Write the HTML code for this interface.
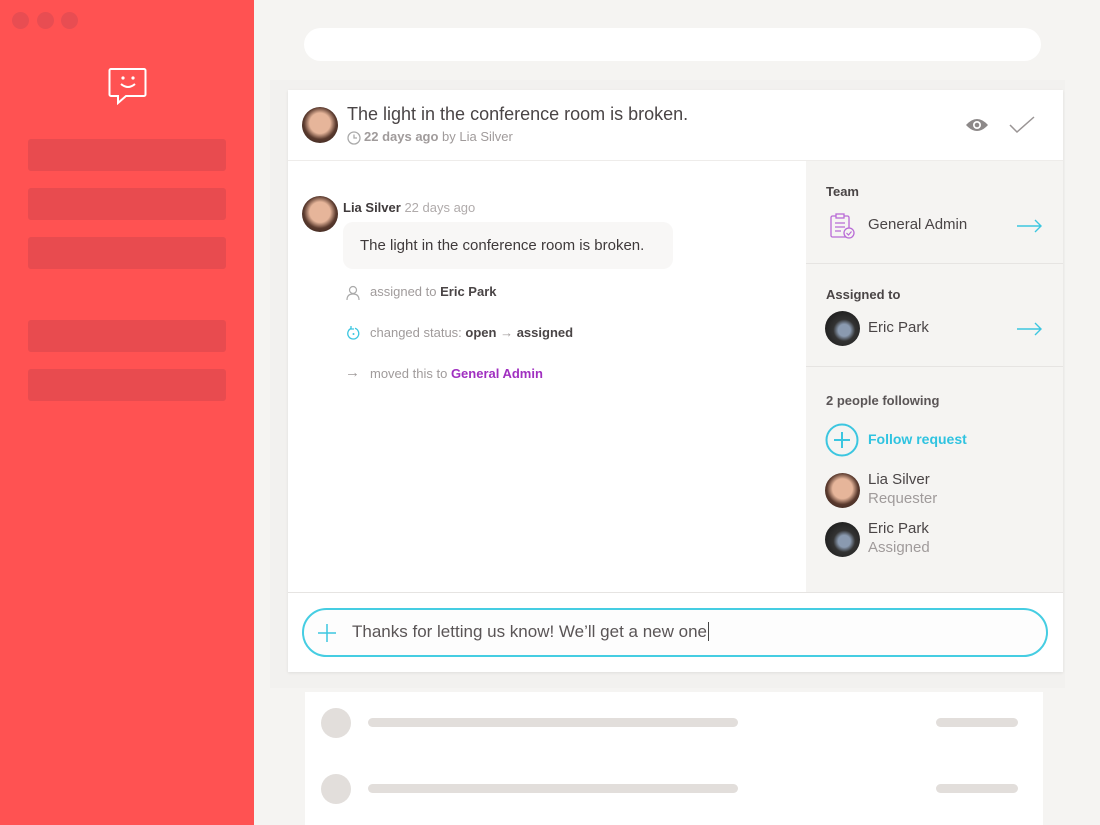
<!DOCTYPE html>
<html><head><meta charset="utf-8"><style>
*{box-sizing:border-box;margin:0;padding:0}
body{width:1100px;height:825px;overflow:hidden;background:#f5f4f2;font-family:"Liberation Sans",sans-serif;position:relative;color:#4a4546}
.abs{position:absolute}
.side{left:0;top:0;width:254px;height:825px;background:#ff5252}
.dot{width:17px;height:17px;border-radius:50%;background:#e84d52;top:12px}
.bar{left:28px;width:198px;height:32px;border-radius:3px;background:#e84b4f}
.av{border-radius:50%;background:radial-gradient(circle at 50% 45%,#e6b59a 0 38%,#5a3a2e 60%,#2a1c18 100%)}
.av2{border-radius:50%;background:radial-gradient(circle at 55% 55%,#8a9ab0 0 22%,#333 40%,#111 100%)}
.muted{color:#a09b9b}
</style></head><body>
<div class="abs side"></div>
<div class="abs dot" style="left:12px"></div>
<div class="abs dot" style="left:37px"></div>
<div class="abs dot" style="left:61px"></div>
<svg class="abs" style="left:108px;top:67px" width="40" height="38" viewBox="0 0 40 38"><path d="M3 2h33a1.5 1.5 0 0 1 1.5 1.5v24a1.5 1.5 0 0 1-1.5 1.5H18l-8 7v-7H3a1.5 1.5 0 0 1-1.5-1.5v-24A1.5 1.5 0 0 1 3 2z" fill="none" stroke="#fff" stroke-width="2"/><circle cx="15" cy="11" r="1.6" fill="#fff"/><circle cx="25" cy="11" r="1.6" fill="#fff"/><path d="M13 17q7 6 14 0" fill="none" stroke="#fff" stroke-width="2"/></svg>
<div class="abs bar" style="top:139px"></div>
<div class="abs bar" style="top:188px"></div>
<div class="abs bar" style="top:237px"></div>
<div class="abs bar" style="top:320px"></div>
<div class="abs bar" style="top:369px"></div>

<div class="abs" style="left:304px;top:28px;width:737px;height:33px;border-radius:17px;background:#fff"></div>
<div class="abs" style="left:270px;top:80px;width:795px;height:608px;background:#f2f1ef"></div>

<div class="abs" style="left:288px;top:90px;width:775px;height:582px;background:#fff;box-shadow:0 1px 3px rgba(0,0,0,.08)"></div>
<div class="abs" style="left:288px;top:160px;width:775px;height:1px;background:#eeecea"></div>
<div class="abs av" style="left:302px;top:107px;width:36px;height:36px"></div>
<div class="abs" style="left:347px;top:104px;font-size:18px;color:#4a4546">The light in the conference room is broken.</div>
<svg class="abs" style="left:347px;top:131px" width="14" height="14"><circle cx="7" cy="7" r="6" fill="none" stroke="#aaa" stroke-width="1.3"/><path d="M7 3.5V7h3" fill="none" stroke="#aaa" stroke-width="1.3"/></svg>
<div class="abs muted" style="left:364px;top:129px;font-size:13px"><b>22 days ago</b> by Lia Silver</div>
<svg class="abs" style="left:965px;top:117px" width="24" height="16"><path d="M1 8Q12-4 23 8Q12 20 1 8z" fill="#8d8989"/><circle cx="12" cy="8" r="4" fill="#fff"/><circle cx="12" cy="8" r="2.3" fill="#8d8989"/></svg>
<svg class="abs" style="left:1009px;top:116px" width="26" height="18"><path d="M1 9l7 7L25 1" fill="none" stroke="#9a9595" stroke-width="1.5"/></svg>

<div class="abs av" style="left:302px;top:196px;width:36px;height:36px"></div>
<div class="abs" style="left:343px;top:200px;font-size:13px"><b style="color:#3f3a3b">Lia Silver</b> <span style="color:#b0abab">22 days ago</span></div>
<div class="abs" style="left:343px;top:222px;width:330px;height:47px;border-radius:10px;background:#f8f7f6;font-size:15px;line-height:47px;padding-left:17px;color:#3f3a3b">The light in the conference room is broken.</div>
<svg class="abs" style="left:346px;top:285px" width="14" height="15"><circle cx="7" cy="5" r="3.5" fill="none" stroke="#aaa" stroke-width="1.2"/><path d="M1 15q0-6 6-6t6 6" fill="none" stroke="#aaa" stroke-width="1.2"/></svg>
<div class="abs muted" style="left:370px;top:284px;font-size:13px">assigned to <b style="color:#4a4546">Eric Park</b></div>
<svg class="abs" style="left:346px;top:326px" width="15" height="15"><path d="M5 2.5A5.5 5.5 0 1 0 9 2.3" fill="none" stroke="#3cc6e0" stroke-width="1.3"/><path d="M5 0v3h3" fill="none" stroke="#3cc6e0" stroke-width="1.3"/><circle cx="7.5" cy="8" r="1" fill="#3cc6e0"/></svg>
<div class="abs muted" style="left:370px;top:325px;font-size:13px">changed status: <b style="color:#4a4546">open</b> → <b style="color:#4a4546">assigned</b></div>
<div class="abs muted" style="left:345px;top:364px;font-size:15px">→</div>
<div class="abs muted" style="left:370px;top:366px;font-size:13px">moved this to <b style="color:#a02fc0">General Admin</b></div>

<div class="abs" style="left:806px;top:161px;width:257px;height:431px;background:#f5f4f2"></div>
<div class="abs" style="left:806px;top:263px;width:257px;height:1px;background:#e6e4e2"></div>
<div class="abs" style="left:806px;top:366px;width:257px;height:1px;background:#e6e4e2"></div>
<div class="abs" style="left:826px;top:184px;font-size:13px;font-weight:bold">Team</div>
<svg class="abs" style="left:830px;top:213px" width="26" height="27"><rect x="1" y="3" width="18" height="21" rx="1.5" fill="none" stroke="#b86ad6" stroke-width="1.3"/><rect x="6" y="1" width="8" height="4" fill="#f5f4f2" stroke="#b86ad6" stroke-width="1.3"/><path d="M5 10h10M5 14h10M5 18h6" stroke="#b86ad6" stroke-width="1.2"/><circle cx="19" cy="20" r="5" fill="#f5f4f2" stroke="#b86ad6" stroke-width="1.3"/><path d="M16.5 20l2 2 3-3.5" fill="none" stroke="#b86ad6" stroke-width="1.2"/></svg>
<div class="abs" style="left:868px;top:216px;font-size:15px">General Admin</div>
<svg class="abs" style="left:1017px;top:219px" width="26" height="14"><path d="M0 7h24M18 1l6 6-6 6" fill="none" stroke="#3cc6e0" stroke-width="1.4"/></svg>
<div class="abs" style="left:826px;top:287px;font-size:13px;font-weight:bold">Assigned to</div>
<div class="abs av2" style="left:825px;top:311px;width:35px;height:35px"></div>
<div class="abs" style="left:868px;top:319px;font-size:15px">Eric Park</div>
<svg class="abs" style="left:1017px;top:322px" width="26" height="14"><path d="M0 7h24M18 1l6 6-6 6" fill="none" stroke="#3cc6e0" stroke-width="1.4"/></svg>
<div class="abs" style="left:826px;top:393px;font-size:13px;font-weight:bold;color:#5a5556">2 people following</div>
<svg class="abs" style="left:825px;top:423px" width="34" height="34"><circle cx="17" cy="17" r="15.5" fill="none" stroke="#3cc6e0" stroke-width="2"/><path d="M17 9v16M9 17h16" stroke="#3cc6e0" stroke-width="2"/></svg>
<div class="abs" style="left:868px;top:431px;font-size:14px;font-weight:bold;color:#2fc3e0">Follow request</div>
<div class="abs av" style="left:825px;top:473px;width:35px;height:35px"></div>
<div class="abs" style="left:868px;top:470px;font-size:15px;line-height:19px">Lia Silver<br><span class="muted">Requester</span></div>
<div class="abs av2" style="left:825px;top:522px;width:35px;height:35px"></div>
<div class="abs" style="left:868px;top:519px;font-size:15px;line-height:19px">Eric Park<br><span class="muted">Assigned</span></div>

<div class="abs" style="left:288px;top:592px;width:775px;height:1px;background:#e6e4e2"></div>
<div class="abs" style="left:302px;top:608px;width:746px;height:49px;border:2px solid #45cde2;border-radius:25px;background:#fdfdfd"></div>
<svg class="abs" style="left:317px;top:623px" width="20" height="20"><path d="M10 1v18M1 10h18" stroke="#3cc6e0" stroke-width="1.5"/></svg>
<div class="abs" style="left:352px;top:622px;font-size:17px;color:#5a5556">Thanks for letting us know! We’ll get a new one<span style="border-left:1px solid #444;margin-left:1px"></span></div>

<div class="abs" style="left:305px;top:692px;width:738px;height:133px;background:#fff"></div>
<div class="abs" style="left:321px;top:708px;width:30px;height:30px;border-radius:50%;background:#e2dedb"></div>
<div class="abs" style="left:368px;top:718px;width:370px;height:9px;border-radius:5px;background:#e2dedb"></div>
<div class="abs" style="left:936px;top:718px;width:82px;height:9px;border-radius:5px;background:#e2dedb"></div>
<div class="abs" style="left:321px;top:774px;width:30px;height:30px;border-radius:50%;background:#e2dedb"></div>
<div class="abs" style="left:368px;top:784px;width:370px;height:9px;border-radius:5px;background:#e2dedb"></div>
<div class="abs" style="left:936px;top:784px;width:82px;height:9px;border-radius:5px;background:#e2dedb"></div>
</body></html>
